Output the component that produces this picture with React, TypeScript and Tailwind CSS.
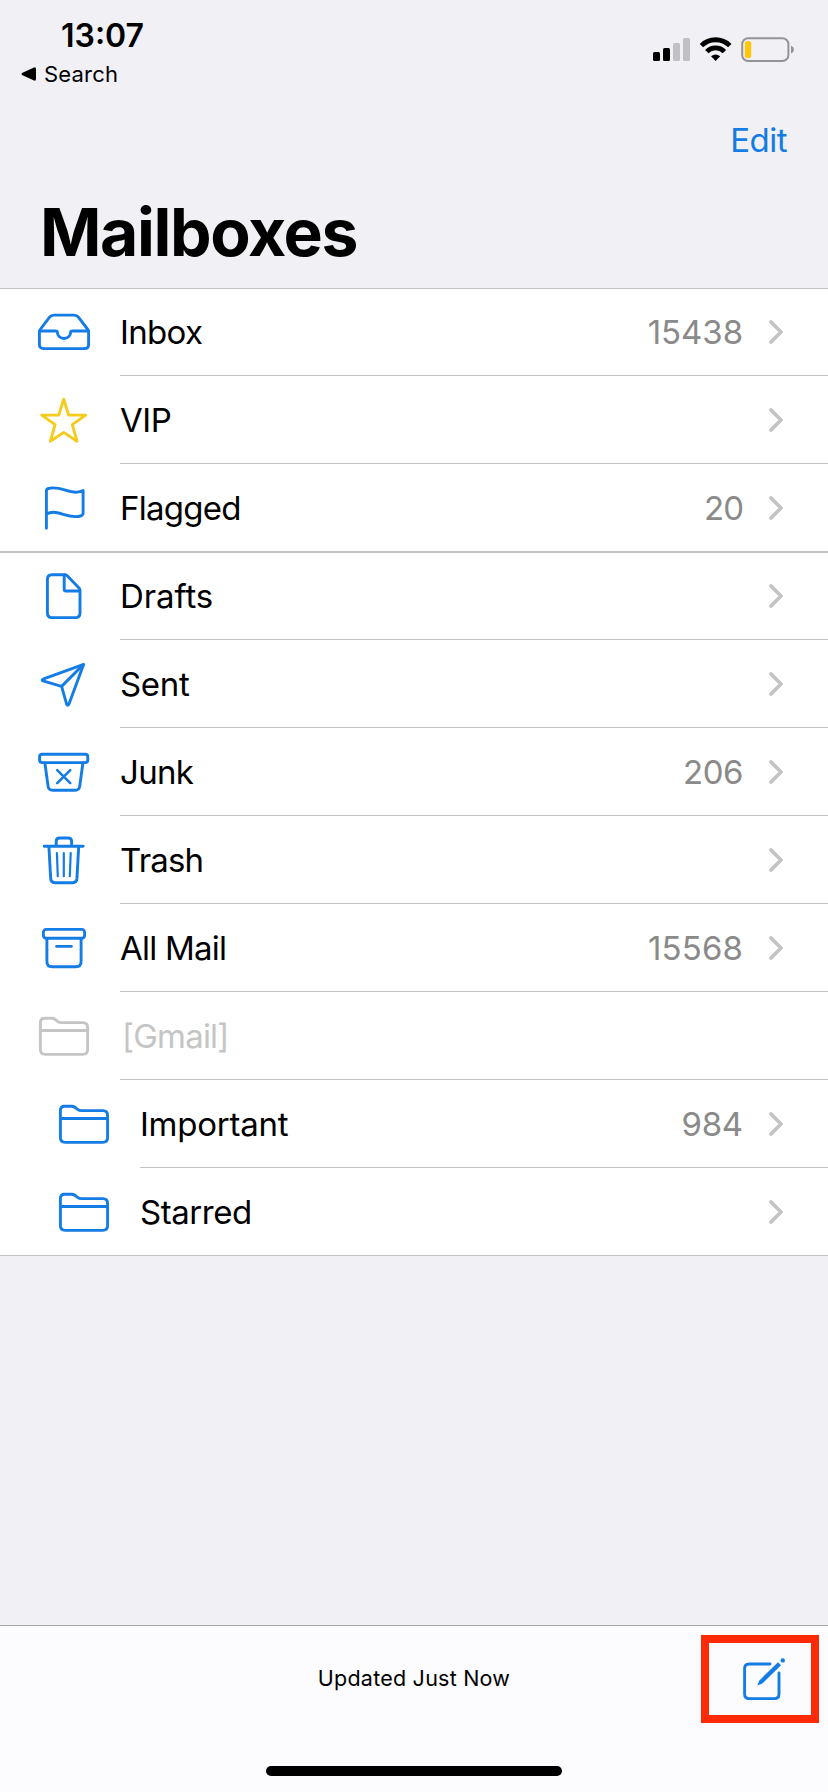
import React from "react";

type IconName = "inbox" | "star" | "flag" | "doc" | "sent" | "junk" | "trash" | "archive" | "folder";

const shapes: Record<IconName, React.ReactNode> = {
  inbox: (
    <>
      <path d="M5.4 30.5Q5.4 28.6 6.6 27L15.6 15.2Q17.2 13.1 19.8 13.1H40.2Q42.8 13.1 44.4 15.2L53.4 27Q54.6 28.6 54.6 30.5V42.4Q54.6 46.6 50.4 46.6H9.6Q5.4 46.6 5.4 42.4Z" />
      <path d="M5.4 29H21.6Q23.4 29 23.4 30.5A6.6 6 0 0 0 36.6 30.5Q36.6 29 38.4 29H54.6" />
    </>
  ),
  star: (
    <path d="M29.7 9.3L34.7 25.1H51.7L38.3 34.6L43 51.2L29.7 42.4L16.4 51.2L21.1 34.6L7.7 25.1H24.7Z" />
  ),
  flag: (
    <path d="M12.4 50.2V13Q12.4 10.6 15.4 10.2C26 8.4 33 14 41.5 14.2C44.5 14.2 46.5 13.5 49.1 12.6V35Q49.1 37.3 46.5 38C35.5 41 28 34.3 19.5 34.3Q15.5 34.3 12.4 36" />
  ),
  doc: (
    <>
      <path d="M31.2 8.7H18Q13.4 8.7 13.4 13.3V47Q13.4 51.6 18 51.6H41.4Q46 51.6 46 47V24.4Q46 23 45 22L33 9.6Q32.2 8.7 31.2 8.7Z" />
      <path d="M30.2 9V23.2Q30.2 25 32 25H45.6" />
    </>
  ),
  sent: (
    <>
      <path d="M49.6 10.4L9 25.2Q7.4 26 9 26.9L27.6 32.4L32.7 50.4Q33.7 52.4 34.8 50.4Z" />
      <path d="M27.6 32.4L49.2 10.8" />
    </>
  ),
  junk: (
    <>
      <rect x="5.6" y="12.3" width="48.2" height="8.3" rx="2.6" />
      <path d="M10.9 21L14.1 44.4Q14.7 48.3 18.6 48.3H41.2Q45.1 48.3 45.7 44.4L48.9 21" />
      <path d="M23.2 28.2L36.3 41.2M36.3 28.2L23.2 41.2" strokeWidth="2.5" />
    </>
  ),
  trash: (
    <>
      <path d="M10.2 16.2H49.2M22.2 16V11.4Q22.2 8 25.6 8H34.2Q37.6 8 37.6 11.4V16" />
      <path d="M14.9 16.4L16.7 48.9Q17 52.7 20.8 52.7H38.8Q42.6 52.7 42.9 48.9L44.7 16.4" />
      <path d="M22.9 23L23.8 46.2M29.8 23V46.2M36.7 23L35.8 46.2" strokeWidth="2.2" />
    </>
  ),
  archive: (
    <>
      <rect x="9.4" y="11.4" width="41.2" height="8.8" rx="2.8" />
      <path d="M12.9 20.5V43.4Q12.9 48.7 18.2 48.7H41.8Q47.1 48.7 47.1 43.4V20.5" />
      <path d="M22.6 28.3H37.4" strokeWidth="2.8" />
    </>
  ),
  folder: (
    <>
      <path d="M6.4 43.6V16.6Q6.4 12.3 10.7 12.3H17.4Q19.6 12.3 21.2 13.5L23.6 15.3Q25.3 16.6 27.5 16.6H48.8Q53.6 16.6 53.6 21.4V43.6Q53.6 48.4 48.8 48.4H11.2Q6.4 48.4 6.4 43.6Z" />
      <path d="M6.4 24.5H53.6" />
    </>
  ),
};

function Icon({ name, className }: { name: IconName; className: string }) {
  return (
    <svg
      viewBox="0 0 60 60"
      className={`size-15 shrink-0 ${className}`}
      fill="none"
      stroke="currentColor"
      strokeWidth="2.9"
      strokeLinecap="round"
      strokeLinejoin="round"
    >
      {shapes[name]}
    </svg>
  );
}

type Mailbox = {
  name: string;
  icon: IconName;
  spacing: string;
  count?: string;
  countSpacing?: string;
  nested?: boolean;
  disabled?: boolean;
  last?: boolean;
};

const primary: Mailbox[] = [
  { name: "Inbox", icon: "inbox", spacing: "tracking-[-0.65px]", count: "15438", countSpacing: "tracking-[-0.05px]" },
  { name: "VIP", icon: "star", spacing: "tracking-[-0.5px]" },
  { name: "Flagged", icon: "flag", spacing: "tracking-[-0.75px]", count: "20", countSpacing: "tracking-[-1px]", last: true },
];

const folders: Mailbox[] = [
  { name: "Drafts", icon: "doc", spacing: "tracking-[-0.1px]" },
  { name: "Sent", icon: "sent", spacing: "tracking-[-0.3px]" },
  { name: "Junk", icon: "junk", spacing: "tracking-[-0.7px]", count: "206", countSpacing: "tracking-[-0.5px]" },
  { name: "Trash", icon: "trash", spacing: "tracking-[-0.8px]" },
  { name: "All Mail", icon: "archive", spacing: "tracking-[-0.75px]", count: "15568", countSpacing: "tracking-[0.1px]" },
  { name: "[Gmail]", icon: "folder", spacing: "pl-0.5 tracking-[-0.8px]", disabled: true },
  { name: "Important", icon: "folder", spacing: "tracking-[-0.25px]", count: "984", countSpacing: "tracking-[-0.2px]", nested: true },
  { name: "Starred", icon: "folder", spacing: "tracking-[-0.45px]", nested: true, last: true },
];

function Row({ box }: { box: Mailbox }) {
  const iconColor = box.disabled ? "text-[#c5c5c5]" : box.icon === "star" ? "text-[#f6cb1c]" : "text-[#147ce5]";
  return (
    <li className={`flex h-22 ${box.nested ? "pl-[54px]" : "pl-[34px]"} ${box.last ? "border-b border-[#c4c4c6]" : ""}`}>
      <div className="flex w-[86px] shrink-0 pt-3.5">
        <Icon name={box.icon} className={iconColor} />
      </div>
      <div className={`flex grow pr-[45px] ${box.last ? "" : "border-b border-[#c4c4c6]"}`}>
        <span className={`grow leading-[88px] ${box.spacing} ${box.disabled ? "text-[#c5c5c5]" : "text-black"}`}>
          {box.name}
        </span>
        {box.count && (
          <span className={`mr-[26px] leading-[88px] text-[#8a8a8a] ${box.countSpacing}`}>{box.count}</span>
        )}
        {!box.disabled && (
          <svg viewBox="0 0 14 24" className="mt-8 h-6 w-3.5 shrink-0" fill="none" stroke="#c4c4c6" strokeWidth="3.8" strokeLinecap="round" strokeLinejoin="round">
            <path d="M2 2L12 12L2 22" />
          </svg>
        )}
      </div>
    </li>
  );
}

function StatusIcons() {
  return (
    <svg viewBox="0 0 144 28" className="mt-9 h-7 w-36 shrink-0">
      <rect x="3" y="16" width="7" height="9" rx="1.5" />
      <rect x="13" y="12" width="7" height="13" rx="1.5" />
      <rect x="23" y="7" width="7" height="18" rx="1.5" fill="#c1c0c5" />
      <rect x="33" y="2" width="7" height="23" rx="1.5" fill="#c1c0c5" />
      <g fill="none" stroke="#000" strokeWidth="4.8">
        <path d="M51.4 9.6A20.2 20.2 0 0 1 79.8 9.6" />
        <path d="M56.8 15.6A12.3 12.3 0 0 1 74.4 15.6" />
      </g>
      <path d="M61 20.3Q65.6 16.8 70.2 20.3L65.6 25Z" />
      <rect x="92.2" y="2.2" width="46.2" height="22.8" rx="6" fill="none" stroke="#949398" strokeWidth="2" />
      <rect x="94.8" y="5" width="6.4" height="17" rx="2.6" fill="#fdc80a" />
      <path d="M141 9.5Q144 10.8 144 13.5Q144 16.2 141 17.5Z" fill="#949398" />
    </svg>
  );
}

export default function App() {
  return (
    <div className="flex h-[1792px] w-[828px] flex-col overflow-hidden bg-[#f1f0f5] font-['Inter',sans-serif] text-[33px] text-black">
      <header className="flex h-72 shrink-0 flex-col">
        <div className="flex h-[120px] justify-between pr-[34px]">
          <div className="pt-5">
            <div className="pl-[61px] text-[32px] leading-8 font-semibold tracking-[0px]">13:07</div>
            <div className="mt-[9px] flex items-start pl-[21px] text-[22px] leading-[26px] tracking-[0.2px]">
              <svg viewBox="0 0 15 14" className="mt-1.5 mr-2 h-3.5 w-[15px]">
                <path d="M1 6Q0 7 1 8L13 13.6Q15 14 15 12V2Q15 0 13 .4Z" />
              </svg>
              Search
            </div>
          </div>
          <StatusIcons />
        </div>
        <div className="flex h-[76px] justify-end pr-[41px] leading-10 tracking-[-0.5px] text-[#147ce5]">
          <span>Edit</span>
        </div>
        <h1 className="pl-10 text-[66px] leading-[72px] font-bold tracking-[-1.4px]">Mailboxes</h1>
      </header>

      <main className="flex grow flex-col">
        <ul className="bg-white shadow-[inset_0_1px_0_#c4c4c6]">
          {primary.map((box) => (
            <Row key={box.name} box={box} />
          ))}
        </ul>
        <ul className="bg-white shadow-[inset_0_1px_0_#c4c4c6]">
          {folders.map((box) => (
            <Row key={box.name} box={box} />
          ))}
        </ul>
      </main>

      <footer className="flex h-[167px] shrink-0 flex-col items-center border-t border-[#a5a5a8] bg-[#fcfbfd]">
        <div className="grid h-[140px] w-full grid-cols-[1fr_auto_1fr]">
          <div />
          <div className="pt-[39px] text-[21.5px] leading-[26px] tracking-[0.23px]">Updated Just Now</div>
          <div className="flex justify-end pt-[9px] pr-[9px]">
            <div className="h-[88px] w-[118px] border-8 border-[#fc2b05] pt-[7px] pl-[26px]">
              <svg viewBox="0 0 60 60" className="size-15" fill="none" stroke="#147ce5" strokeWidth="2.9" strokeLinecap="round">
                <path d="M35 14H14.2Q9.6 14 9.6 18.6V44Q9.6 48.6 14.2 48.6H39.4Q44 48.6 44 44V23" />
                <path d="M22.2 35.6L24.4 30.4L43 12.2L46 15.2L27.4 33.4Z" fill="#147ce5" stroke="none" />
                <circle cx="47.8" cy="10.4" r="2.2" fill="#147ce5" stroke="none" />
              </svg>
            </div>
          </div>
        </div>
        <div className="h-2.5 w-[296px] rounded-full bg-black" />
      </footer>
    </div>
  );
}
